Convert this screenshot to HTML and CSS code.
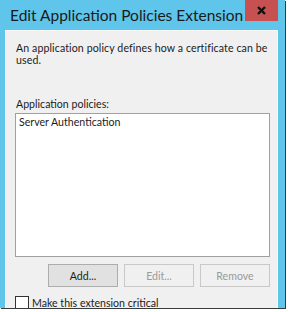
FILE: index.html
```html
<!DOCTYPE html>
<html lang="en">
<head>
  <meta charset="UTF-8">
  <title>Edit Application Policies Extension</title>
  <link rel="stylesheet" href="styles.css">
</head>
<body>
  <div class="window">
    <div class="titlebar">
      <span class="title">Edit Application Policies Extension</span>
      <button class="close">
        <svg width="9" height="9" viewBox="0 0 9 9"><path d="M1 1 8 8M8 1 1 8" stroke="#111" stroke-width="2.4"/></svg>
      </button>
    </div>
    <div class="panel">
      <p class="desc">An application policy defines how a certificate can be used.</p>
      <label class="list-label">Application policies:</label>
      <div class="listbox">
        <div class="item">Server Authentication</div>
      </div>
      <div class="actions">
        <button class="btn">Add...</button>
        <button class="btn" disabled>Edit...</button>
        <button class="btn" disabled>Remove</button>
      </div>
      <label class="check"><span class="box"></span>Make this extension critical</label>
    </div>
  </div>
</body>
</html>
```

FILE: styles.css
```css
:root {
  --frame:   #5fc5ea;
  --panel:   #f0f0f0;
  --close:   #c75050;
  --font:    Lato, 'Open Sans', Arial, sans-serif;
}
* { box-sizing:border-box; margin:0; padding:0 }
body {
  background:#fff;
  width:289px; height:312px;
  overflow:hidden;
  font-family:var(--font);
  font-size:10.6px;
  color:#1b1b1b;
}
.window {
  width:285px; height:308px;
  background:var(--frame);
  box-shadow:1px 1px 0 #3a3a3a;
  display:flex; flex-direction:column;
  overflow:hidden;
}
/* titlebar */
.titlebar {
  height:30px; flex:none;
  display:flex; align-items:flex-start; justify-content:space-between;
}
.title {
  font-size:15.5px;
  padding:6px 0 0 10px;
  color:#1a1a1a;
  white-space:nowrap;
}
.close {
  flex:none;
  width:33px; height:21px;
  margin-right:7px;
  background:var(--close);
  border:none;
  display:flex; align-items:center; justify-content:center;
}
/* content */
.panel {
  flex:1;
  margin:0 7px 0 5px;
  background:var(--panel);
  border:1px solid #f8f8f8;
  border-bottom:none;
  padding:11px 0 0 9px;
}
.desc {
  padding-left:1px;
  width:256px;
  line-height:12px;
  height:56px;
  letter-spacing:.1px;
}
.list-label { display:block; padding-left:1px; line-height:12px; }
.listbox {
  width:255px; height:144px;
  margin-top:3px;
  background:#fff;
  border:1px solid #a0a0a0;
  padding:2px 3px;
}
.item { line-height:12px; }
.actions {
  width:255px;
  margin-top:7px;
  display:flex; justify-content:flex-end; gap:6px;
}
.btn {
  width:70px; height:23px;
  font-family:var(--font);
  font-size:10.6px;
  color:#1b1b1b;
  background:#e1e1e1;
  border:1px solid #adadad;
}
.btn:disabled {
  background:#f0f0f0;
  border-color:#c8c8c8;
  color:#9a9a9a;
}
.check {
  display:flex; align-items:center; gap:3px;
  margin-top:9px;
  line-height:12px;
}
.box {
  width:14px; height:14px;
  background:#fff;
  border:1px solid #333;
}
```
